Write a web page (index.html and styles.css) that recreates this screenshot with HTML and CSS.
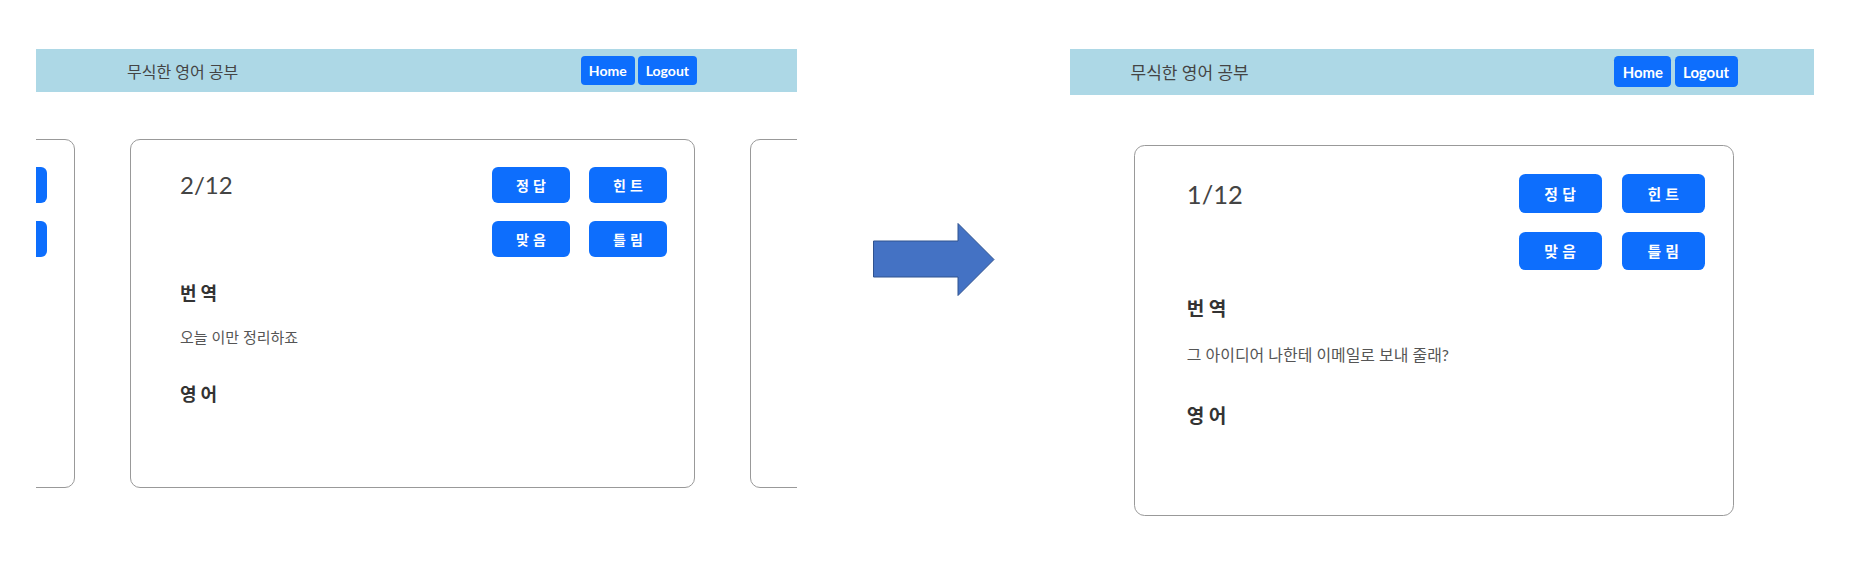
FILE: index.html
```html
<!DOCTYPE html>
<html lang="ko">
<head>
  <meta charset="UTF-8" />
  <meta name="viewport" content="width=device-width, initial-scale=1.0"/>
  <title>무식한 영어 공부</title>
  <link rel="stylesheet" href="styles.css">
</head>
<body>

  <div class="slide">

    <!-- 이전 화면: 카드 슬라이더 -->
    <section class="shot">
      <nav class="navbar">
        <div class="brand">무식한 영어 공부</div>
        <div class="nav-btns">
          <a href="#" class="btn btn-sm">Home</a>
          <a href="#" class="btn btn-sm">Logout</a>
        </div>
      </nav>

      <div class="track track-slide">
        <div class="card">
          <div class="card-head">
            <h4 class="counter">1/12</h4>
            <div class="actions">
              <button class="btn btn-card">정답</button>
              <button class="btn btn-card">힌트</button>
              <button class="btn btn-card">맞음</button>
              <button class="btn btn-card">틀림</button>
            </div>
          </div>
        </div>

        <div class="card">
          <div class="card-head">
            <h4 class="counter">2/12</h4>
            <div class="actions">
              <button class="btn btn-card">정답</button>
              <button class="btn btn-card">힌트</button>
              <button class="btn btn-card">맞음</button>
              <button class="btn btn-card">틀림</button>
            </div>
          </div>
          <h5 class="section-title">번역</h5>
          <p class="sentence">오늘 이만 정리하죠</p>
          <h5 class="section-title">영어</h5>
        </div>

        <!-- 다음 카드 (가장자리만 보임) -->
        <div class="card"></div>
      </div>
    </section>

    <div class="arrow">
      <svg width="122" height="74" viewBox="0 0 122 74">
        <polygon points="0.5,18 85,18 85,0.5 121,36.5 85,72.5 85,54 0.5,54" fill="#4472c4" stroke="#2f528f" stroke-width="1"/>
      </svg>
    </div>

    <!-- 이후 화면: 카드 한 장 -->
    <section class="shot shot-after">
      <nav class="navbar">
        <div class="brand">무식한 영어 공부</div>
        <div class="nav-btns">
          <a href="#" class="btn btn-sm">Home</a>
          <a href="#" class="btn btn-sm">Logout</a>
        </div>
      </nav>

      <div class="track track-single">
        <div class="card">
          <div class="card-head">
            <h4 class="counter">1/12</h4>
            <div class="actions">
              <button class="btn btn-card">정답</button>
              <button class="btn btn-card">힌트</button>
              <button class="btn btn-card">맞음</button>
              <button class="btn btn-card">틀림</button>
            </div>
          </div>
          <h5 class="section-title">번역</h5>
          <p class="sentence">그 아이디어 나한테 이메일로 보내 줄래?</p>
          <h5 class="section-title">영어</h5>
        </div>
      </div>
    </section>

  </div>

</body>
</html>
```

FILE: styles.css
```css
* {
  box-sizing: border-box;
}

body {
  margin: 0;
  background: #fff;
  font-family: Lato, 'Noto Sans CJK KR', sans-serif;
  color: #333;
}

.slide {
  display: flex;
  align-items: flex-start;
  padding: 49px 0 0 36px;
}

.shot {
  flex: 0 0 auto;
  width: 761px;
  overflow: hidden;
}

.shot-after {
  width: 700px;
  zoom: 1.063;
}

/* 상단 메뉴 */
.navbar {
  display: flex;
  align-items: center;
  justify-content: space-between;
  height: 43px;
  padding: 0 100px 0 91px;
  background-color: lightblue;
}

.shot-after .navbar {
  padding: 0 72px 0 57px;
}

.brand {
  font-size: 16px;
  color: #444;
}

.nav-btns {
  display: flex;
  gap: 3px;
}

.btn {
  display: inline-block;
  border: none;
  background-color: #0d6efd;
  color: white;
  font-family: inherit;
  font-weight: bold;
  text-decoration: none;
  cursor: pointer;
}

.btn:hover {
  background-color: #0b5ed7;
}

.btn-sm {
  padding: 4px 8px;
  font-size: 14px;
  line-height: 21px;
  border-radius: 4px;
}

/* 카드 */
.track {
  display: flex;
  gap: 55px;
  padding-top: 47px;
}

.track-slide {
  transform: translateX(-526px);
}

.track-single {
  padding-left: 60px;
}

.card {
  flex: 0 0 565px;
  height: 349px;
  padding: 27px 27px 0 49px;
  border: 1px solid #999;
  border-radius: 10px;
  background: white;
}

.card-head {
  display: flex;
  justify-content: space-between;
  align-items: flex-start;
}

.counter {
  margin: 4px 0 0;
  font-size: 24px;
  font-weight: normal;
  line-height: 1.2;
  color: #444;
}

.actions {
  display: grid;
  grid-template-columns: 78px 78px;
  gap: 18px 19px;
}

.btn-card {
  height: 36px;
  padding: 0 0 0 4px;
  border-radius: 6px;
  font-size: 14px;
  letter-spacing: 4px;
}

.section-title {
  margin: 26px 0 0;
  font-size: 18px;
  font-weight: bold;
  line-height: 1.2;
  letter-spacing: 4px;
  color: #333;
}

.sentence {
  margin: 21px 0 36px;
  font-size: 15px;
  line-height: 1.5;
  color: #555;
}

.arrow {
  flex: 0 0 auto;
  margin: 174px 75px 0 76px;
  line-height: 0;
}
```
